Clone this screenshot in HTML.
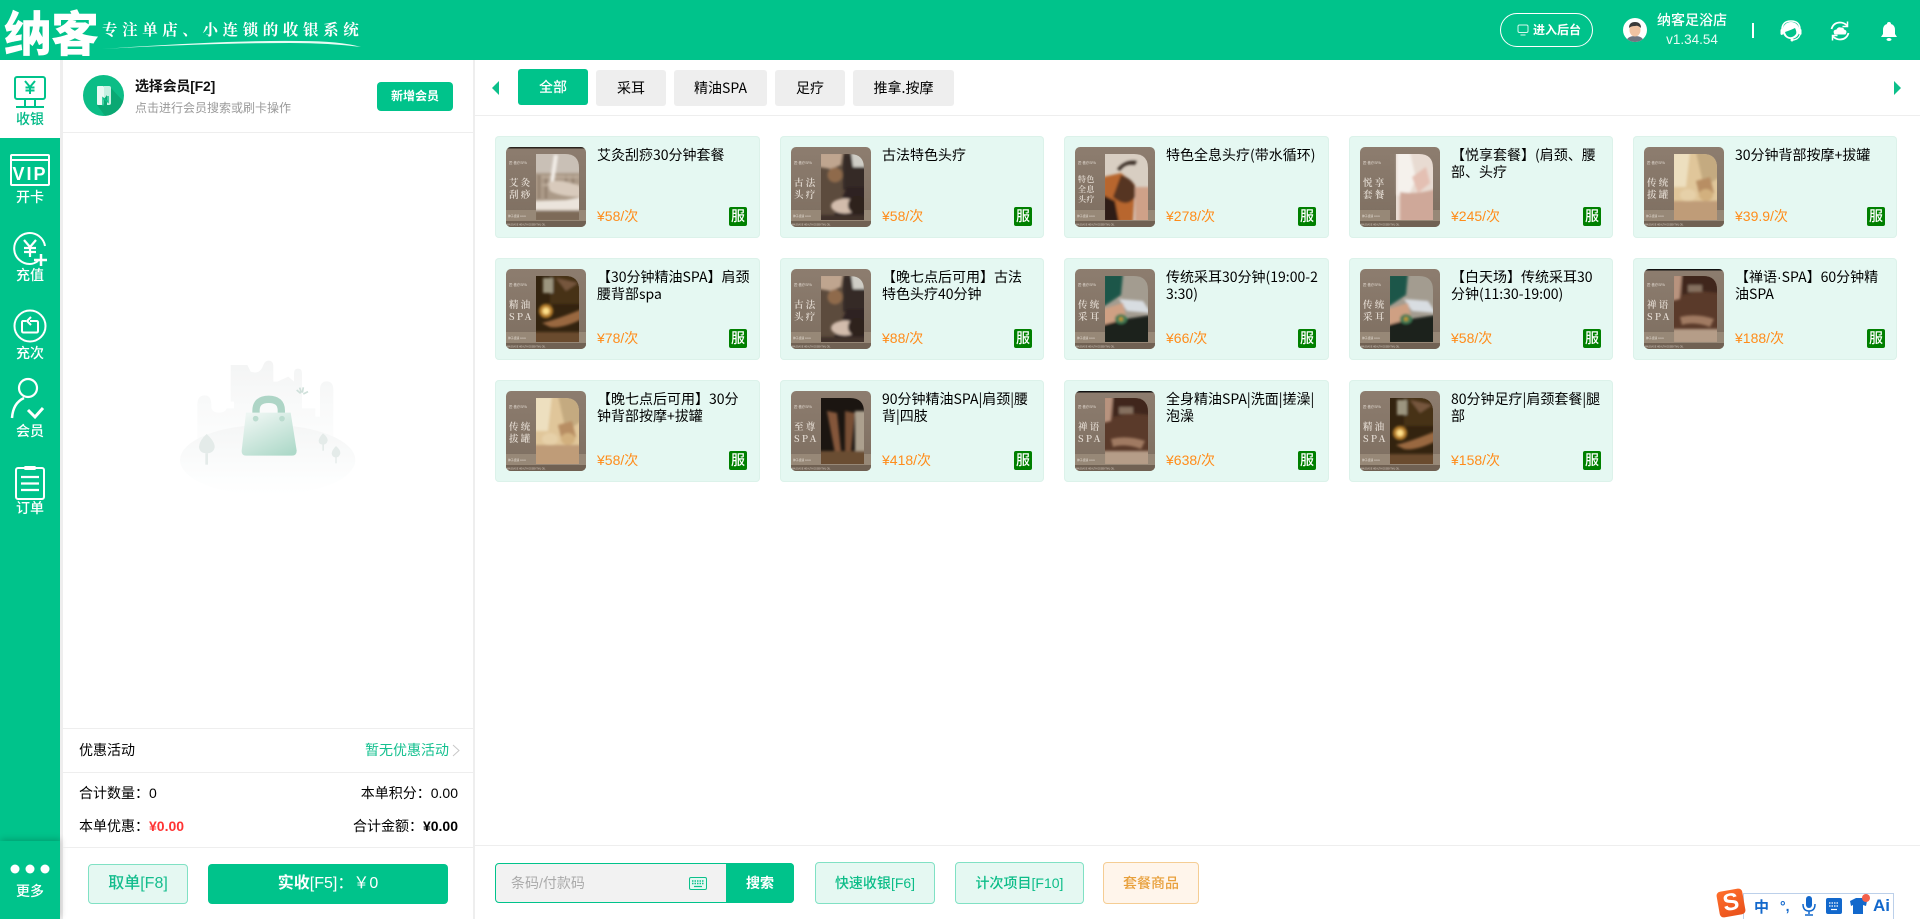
<!DOCTYPE html>
<html lang="zh">
<head>
<meta charset="utf-8">
<title>纳客</title>
<style>
html,body{margin:0;padding:0;width:1920px;height:919px;overflow:hidden;background:#fff;font-family:"Liberation Sans","Noto Sans CJK SC",sans-serif;color:#000}
.a{position:absolute;white-space:nowrap}
.bar{position:absolute;background:#eeeeee}
.side{position:absolute;left:0;width:60px;text-align:center;font-size:14px;line-height:18px;color:#fff;font-weight:500}
.tab{position:absolute;height:36px;line-height:36px;top:70px;background:#eeeeee;border-radius:3px;text-align:center;font-size:14px;color:#000;font-family:"Noto Sans CJK SC",sans-serif}
.c{position:absolute;width:264px;height:102px;background:#e5f8f2;border-radius:4px;box-shadow:inset 0 0 0 1px #dcf2ea}
.w{width:265px}
.c svg{position:absolute;left:11px;top:11px;width:80px;height:80px;border-radius:5px}
.n{position:absolute;left:102px;top:11px;font-size:14px;line-height:17px;white-space:nowrap;color:#000;font-family:"Noto Sans CJK SC",sans-serif}
.p{position:absolute;left:102px;top:70px;font-size:14px;line-height:20px;color:#ff8c1a}
.s{position:absolute;left:234px;top:71px;width:18px;height:19px;background:#008000;color:#fff;font-size:14px;font-weight:500;line-height:19px;text-align:center;border-radius:2px}
.tt{font-family:"Noto Serif CJK SC","Liberation Serif",serif;font-size:9.5px;font-weight:600;fill:#e4dcd3;letter-spacing:2.2px}
.ts{font-family:"Noto Serif CJK SC","Liberation Serif",serif;font-size:8px;font-weight:600;fill:#e4dcd3;letter-spacing:.4px}
.btn{position:absolute;text-align:center;box-sizing:border-box;border-radius:4px;white-space:nowrap}
</style>
</head>
<body>
<svg width="0" height="0" style="position:absolute">
<defs>
<linearGradient id="fb" x1="0" y1="0" x2="0" y2="1"><stop offset="0" stop-color="#8d7d6f"/><stop offset="1" stop-color="#7d6e60"/></linearGradient>
<clipPath id="arch"><path d="M30 7H59Q73 7 73 21V73H30Z"/></clipPath>
<filter id="bl" x="-10%" y="-10%" width="120%" height="120%"><feGaussianBlur stdDeviation="1.3"/></filter>
<symbol id="f" viewBox="0 0 80 80">
<rect width="80" height="80" fill="url(#fb)"/>
<rect y="63" width="80" height="17" fill="#978877"/>
<rect y="74" width="80" height="6" fill="#706153"/>
<text x="3" y="17" font-size="3.4" fill="#e0d8cf">匠·養疗SPA</text>
<text x="2" y="70" font-size="2.8" fill="#e0d8cf">神子盛遇 ∞∞∞</text>
<text x="1" y="78.3" font-size="2.3" fill="#d8cfc5">MASSAGE  HEALTH  ESSENTIAL OIL</text>
</symbol>
<symbol id="p1" viewBox="0 0 80 80"><g clip-path="url(#arch)"><rect x="30" y="7" width="43" height="66" fill="#ab9a88"/><g filter="url(#bl)">
<rect x="26" y="2" width="52" height="24" fill="#c9c0b6"/>
<path d="M33 28V52M40 28V52M60 28V46M67 28V46" stroke="#8f7c6a" stroke-width="2"/>
<path d="M36 30H73M36 38H73" stroke="#bfae9c" stroke-width="2"/>
<path d="M50 8L45 42" stroke="#f2ede7" stroke-width="4"/>
<path d="M42 36Q52 30 76 40V50Q55 50 44 44Z" fill="#d8cabc"/>
<path d="M28 54L60 53L76 50V63H28Z" fill="#ebe4dc"/>
<rect x="28" y="64" width="48" height="11" fill="#7d6a58"/>
</g></g></symbol>
<symbol id="p2" viewBox="0 0 80 80"><g clip-path="url(#arch)"><rect x="30" y="7" width="43" height="66" fill="#5c4b3d"/><g filter="url(#bl)">
<rect x="52" y="7" width="24" height="36" fill="#352b25"/>
<path d="M60 5H76V20H62Z" fill="#cfcdc6"/>
<path d="M28 5H52L50 18L40 22L28 20Z" fill="#bfa58f"/>
<ellipse cx="44" cy="28" rx="7.500" ry="7.500" fill="#8f6b4c"/>
<path d="M56 40H76V75H40Z" fill="#2f2420"/>
<ellipse cx="54" cy="59" rx="14" ry="7.500" fill="#d2bcac"/>
<ellipse cx="66" cy="58" rx="9" ry="9" fill="#2e221d"/>
<rect x="28" y="68" width="48" height="7" fill="#41302a"/>
</g></g></symbol>
<symbol id="p3" viewBox="0 0 80 80"><g clip-path="url(#arch)"><rect x="30" y="7" width="43" height="66" fill="#d8cec2"/><g filter="url(#bl)">
<path d="M42 22Q50 12 62 14L60 18Q50 16 45 24Z" fill="#3b2f28"/>
<path d="M28 30L46 26L60 38L58 75H28Z" fill="#b8662e"/>
<path d="M46 28Q64 34 60 50Q52 62 38 50Z" fill="#573422"/>
<path d="M28 48L40 54L44 75H28Z" fill="#2f1c14"/>
<rect x="60" y="40" width="16" height="35" fill="#cfa188"/>
</g></g></symbol>
<symbol id="p4" viewBox="0 0 80 80"><rect x="30" y="7" width="6" height="66" fill="url(#fb)"/><g clip-path="url(#arch)"><rect x="36" y="7" width="37" height="66" fill="#e8dbd2"/><g filter="url(#bl)">
<path d="M37 5H50L56 32L48 50L37 48Z" fill="#f5f1ec"/>
<path d="M52 30L66 20L70 36L58 46Z" fill="#e4c0b3"/>
<path d="M40 45Q56 48 76 42V75H40Z" fill="#cfa899"/>
</g></g></symbol>
<symbol id="p5" viewBox="0 0 80 80"><g clip-path="url(#arch)"><rect x="30" y="7" width="43" height="66" fill="#e0c69a"/><g filter="url(#bl)">
<path d="M28 5H46L42 40H28Z" fill="#eddfbf"/>
<path d="M52 5H76V30L60 40Z" fill="#c4aa80"/>
<path d="M52 34L66 30L70 46L56 50Z" fill="#b88e63"/>
<ellipse cx="44" cy="48" rx="8" ry="6" fill="#e6d0a8"/>
<ellipse cx="62" cy="48" rx="7" ry="6" fill="#d2b07e"/>
<rect x="28" y="54" width="48" height="21" fill="#bf9c78"/>
</g></g></symbol>
<symbol id="p6" viewBox="0 0 80 80"><g clip-path="url(#arch)"><rect x="30" y="7" width="43" height="66" fill="#33230f"/><g filter="url(#bl)">
<rect x="44" y="5" width="32" height="30" fill="#473118"/>
<path d="M37 9H47V24H37Z" fill="#9c957f"/>
<path d="M50 9L72 14L60 22Z" fill="#76563c"/>
<circle cx="40" cy="42" r="7" fill="#b87f2c"/>
<circle cx="40" cy="42" r="3.500" fill="#ffe08a"/>
<path d="M36 54Q52 50 76 40V50Q56 60 44 58Z" fill="#99683f"/>
<rect x="28" y="63" width="48" height="12" fill="#6b4c2e"/>
</g></g></symbol>
<symbol id="p7" viewBox="0 0 80 80"><g clip-path="url(#arch)"><rect x="30" y="7" width="43" height="66" fill="#a39c90"/><g filter="url(#bl)">
<path d="M28 5H48L46 26L28 38Z" fill="#1e5749"/>
<path d="M44 30L68 32L76 44L52 42Z" fill="#d8dde1"/>
<path d="M28 40L48 34L52 52L28 56Z" fill="#cfa083"/>
<path d="M28 56L50 50L76 46V75H28Z" fill="#1c241c"/>
<ellipse cx="46" cy="50" rx="6" ry="5" fill="#3f7a55"/>
<circle cx="46" cy="50" r="2" fill="#c99a2c"/>
</g></g></symbol>
<symbol id="p8" viewBox="0 0 80 80"><g clip-path="url(#arch)"><rect x="30" y="7" width="43" height="66" fill="#5a3a2a"/><g filter="url(#bl)">
<path d="M28 5H38L36 30L28 32Z" fill="#b8937e"/>
<path d="M38 5H76V24L56 22L38 26Z" fill="#3f281d"/>
<rect x="44" y="16" width="14" height="7" fill="#85705f"/>
<path d="M36 48Q52 44 70 50L66 58Q50 52 38 56Z" fill="#a07a62"/>
<rect x="28" y="60" width="48" height="15" fill="#b59d88"/>
</g></g></symbol>
<symbol id="p9" viewBox="0 0 80 80"><g clip-path="url(#arch)"><rect x="30" y="7" width="43" height="66" fill="#1b1511"/><g filter="url(#bl)">
<rect x="64" y="20" width="12" height="50" fill="#aca08e"/>
<path d="M36 20L46 22L50 60L44 62Z" fill="#84573a"/>
<path d="M54 20L64 22L60 62L54 60Z" fill="#785034"/>
<rect x="28" y="60" width="48" height="15" fill="#6b4e33"/>
</g></g></symbol>
</defs>
</svg>

<!-- header -->
<div class="a" style="left:0;top:0;width:1920px;height:60px;background:#00c38b"></div>
<div class="a" style="left:4px;top:5px;font:900 48px/50px 'Noto Sans CJK SC',sans-serif;color:#fff;letter-spacing:-1px">纳客</div>
<div class="a" style="left:102px;top:17px;font:700 15.5px/24px 'Noto Serif CJK SC',serif;color:#fff;letter-spacing:4.6px">专注单店、小连锁的收银系统</div>
<svg class="a" style="left:100px;top:38px" width="265" height="14"><path d="M2 11Q130 2 200 3Q240 3 261 9Q230 5 190 5Q110 5 2 11Z" fill="#e8fbf4"/></svg>

<div class="a" style="left:1500px;top:13px;width:93px;height:34px;box-sizing:border-box;border:1px solid #fff;border-radius:17px"></div>
<svg class="a" style="left:1517px;top:24px" width="12" height="12" viewBox="0 0 12 12"><rect x="1" y="1" width="10" height="7.500" rx="1.500" fill="none" stroke="#d8f7ec" stroke-width="1"/><path d="M3.500 11H8.500" stroke="#d8f7ec"/></svg>
<div class="a" style="left:1533px;top:21px;font-size:12px;line-height:18px;font-weight:700;color:#fff">进入后台</div>
<svg class="a" style="left:1623px;top:18px" width="24" height="24" viewBox="0 0 24 24"><defs><clipPath id="av"><circle cx="12" cy="12" r="12"/></clipPath></defs><circle cx="12" cy="12" r="12" fill="#fff"/><g clip-path="url(#av)"><path d="M3 24Q4 18 12 18Q20 18 21 24Z" fill="#6e7580"/><ellipse cx="12" cy="12" rx="5.500" ry="6.500" fill="#f0c3a2"/><path d="M6 10Q6 4 12 4Q18 4 18 10Q15 7 12 8Q8 8 6 10Z" fill="#3a3a3a"/></g></svg>
<div class="a" style="left:1657px;top:11px;width:70px;text-align:center;font-size:14px;line-height:18px;color:#fff;font-weight:500">纳客足浴店</div>
<div class="a" style="left:1657px;top:31px;width:70px;text-align:center;font-size:13.500px;line-height:18px;color:#e9fbf5">v1.34.54</div>
<div class="a" style="left:1752px;top:23px;width:2px;height:15px;background:#fff"></div>
<svg class="a" style="left:1780px;top:20px" width="22" height="22" viewBox="0 0 22 22"><circle cx="11" cy="10.500" r="8.500" fill="#fff"/><path d="M5 12Q11 10 15 8Q17 12 16 14Q13 18 9 17Q6 16 5 12Z" fill="#00c38b"/><path d="M2 10Q2 1 11 1Q20 1 20 10" fill="none" stroke="#fff" stroke-width="1.600"/><rect x="0.500" y="9" width="2.500" height="6" rx="1.200" fill="#fff"/><rect x="19" y="9" width="2.500" height="6" rx="1.200" fill="#fff"/><path d="M20 15Q18 20 12 20" fill="none" stroke="#fff" stroke-width="1.200"/><circle cx="12" cy="20" r="1.500" fill="#fff"/></svg>
<svg class="a" style="left:1830px;top:21px" width="20" height="20" viewBox="0 0 20 20"><path d="M1.500 8Q3.500 1.500 10 1.500Q14 1.500 17 4.500M18.500 12Q16.500 18.500 10 18.500Q6 18.500 3 15.500" fill="none" stroke="#fff" stroke-width="1.800"/><path d="M17.500 0.500V5.500H12.500M2.500 19.500V14.500H7.500" fill="none" stroke="#fff" stroke-width="1.500"/><path d="M4.500 13.500Q2 9 6.500 8.500Q8 5.500 11 6.500Q14 6.500 14 8.500Q18 9.500 15.500 13.500Z" fill="#fff"/></svg>
<svg class="a" style="left:1881px;top:21px" width="16" height="20" viewBox="0 0 16 20"><path d="M8 1Q10 1 10 3Q14 4 14 9V13L16 16H0L2 13V9Q2 4 6 3Q6 1 8 1Z" fill="#fff"/><ellipse cx="8" cy="18.500" rx="2.500" ry="1.500" fill="#fff"/></svg>

<!-- sidebar -->
<div class="a" style="left:0;top:60px;width:60px;height:859px;background:#00c38b"></div>
<div class="a" style="left:60px;top:60px;width:3px;height:859px;background:#eeeeee"></div>
<div class="a" style="left:0;top:60px;width:60px;height:78px;background:#fff"></div>
<svg class="a" style="left:12px;top:74px" width="36" height="36" viewBox="0 0 36 36"><rect x="3" y="3" width="30" height="22" rx="2" fill="none" stroke="#00c38b" stroke-width="2"/><path d="M13 25V32M23 25V32" stroke="#00c38b" stroke-width="2"/><path d="M4 33H32" stroke="#00c38b" stroke-width="2"/><path d="M13 7L18 13L23 7M18 13V20M13.500 13.500H22.500M13.500 16.500H22.500" fill="none" stroke="#00c38b" stroke-width="2"/></svg>
<div class="side" style="top:110px;color:#00b986">收银</div>
<svg class="a" style="left:9px;top:153px" width="42" height="34" viewBox="0 0 42 34"><rect x="2" y="2" width="38" height="30" rx="1" fill="none" stroke="#fff" stroke-width="2"/><path d="M2 7H40" stroke="#fff" stroke-width="2"/><text x="21" y="27" text-anchor="middle" font-family="Liberation Sans,sans-serif" font-size="18" font-weight="700" fill="#fff" letter-spacing="2">VIP</text></svg>
<div class="side" style="top:188px">开卡</div>
<svg class="a" style="left:12px;top:231px" width="36" height="36" viewBox="0 0 36 36"><path d="M26 30Q22 33 18 33A15.500 15.500 0 1 1 33 15" fill="none" stroke="#fff" stroke-width="2"/><path d="M12 9L18 16L24 9M18 16V26M12 17H24M12 21H24" fill="none" stroke="#fff" stroke-width="2.200"/><path d="M22 29H35M29 23V35" stroke="#fff" stroke-width="2.500"/></svg>
<div class="side" style="top:266px">充值</div>
<svg class="a" style="left:13px;top:309px" width="34" height="34" viewBox="0 0 34 34"><circle cx="17" cy="17" r="15.500" fill="none" stroke="#fff" stroke-width="2"/><path d="M13 12H10Q9 12 9 13.500V22Q9 23.500 10.500 23.500H23.500Q25 23.500 25 22V13.500Q25 12 23.500 12H17" fill="none" stroke="#fff" stroke-width="2"/><path d="M18 8L14 12L18 16" fill="none" stroke="#fff" stroke-width="2"/></svg>
<div class="side" style="top:344px">充次</div>
<svg class="a" style="left:10px;top:377px" width="36" height="44" viewBox="0 0 36 44"><circle cx="18" cy="11" r="9" fill="none" stroke="#fff" stroke-width="2.200"/><path d="M2 41Q3 26 14 21" fill="none" stroke="#fff" stroke-width="2.500"/><path d="M18 33L25 40L33 31" fill="none" stroke="#fff" stroke-width="3"/></svg>
<div class="side" style="top:422px">会员</div>
<svg class="a" style="left:14px;top:465px" width="32" height="36" viewBox="0 0 32 36"><rect x="2" y="3" width="28" height="31" rx="2" fill="none" stroke="#fff" stroke-width="2"/><rect x="10" y="1" width="12" height="4" rx="1.500" fill="#fff"/><path d="M7 12H25M7 18.500H25M7 25H25" stroke="#fff" stroke-width="2.200"/></svg>
<div class="side" style="top:499px">订单</div>
<div class="a" style="left:0;top:841px;width:60px;height:78px;background:#00c38b;box-shadow:1px -2px 6px rgba(0,0,0,.18)"></div>
<svg class="a" style="left:10px;top:864px" width="40" height="10"><circle cx="5" cy="5" r="4.500" fill="#fff"/><circle cx="20" cy="5" r="4.500" fill="#fff"/><circle cx="35" cy="5" r="4.500" fill="#fff"/></svg>
<div class="side" style="top:882px">更多</div>

<!-- left panel -->
<div class="a" style="left:473px;top:60px;width:2px;height:859px;background:#eeeeee"></div>
<svg class="a" style="left:83px;top:75px" width="41" height="41" viewBox="0 0 41 41"><defs><clipPath id="mc"><circle cx="20.500" cy="20.500" r="20.500"/></clipPath></defs><circle cx="20.500" cy="20.500" r="20.500" fill="#0cbd86"/><path clip-path="url(#mc)" d="M27 12L41 27V41H22L14 30Z" fill="#0aa873"/><rect x="14" y="11" width="7" height="19" rx="1" fill="#eaf9f4"/><path d="M21 11H26Q28 11 28 13V28Q28 30 26 30H24V20L21 24Z" fill="#c6f0e2"/><path d="M20 31L20 23L25 27V21" fill="none" stroke="#0cbd86" stroke-width="1.500"/></svg>
<div class="a" style="left:135px;top:77px;font-size:14px;line-height:18px;font-weight:700;color:#111;letter-spacing:-.2px">选择会员[F2]</div>
<div class="a" style="left:135px;top:99px;font-size:12px;line-height:18px;color:#9a9a9a">点击进行会员搜索或刷卡操作</div>
<div class="btn" style="left:377px;top:82px;width:76px;height:29px;line-height:29px;background:#00c38b;color:#fff;font-size:12px;font-weight:700">新增会员</div>
<div class="bar" style="left:63px;top:132px;width:410px;height:1px"></div>

<!-- empty illustration -->
<svg class="a" style="left:160px;top:340px" width="220" height="170" viewBox="0 0 660 510">
<defs>
<linearGradient id="g1" x1="0" y1="0" x2="0" y2="1"><stop offset="0" stop-color="#f3f4f4"/><stop offset="1" stop-color="#f9fafa" stop-opacity=".5"/></linearGradient>
<linearGradient id="g2" x1="0" y1="0" x2="0" y2="1"><stop offset="0" stop-color="#f5f6f6"/><stop offset=".8" stop-color="#fdfefe"/><stop offset="1" stop-color="#fff"/></linearGradient>
<linearGradient id="g3" x1=".2" y1="0" x2=".8" y2="1"><stop offset="0" stop-color="#eef6f3"/><stop offset="1" stop-color="#aed9c9"/></linearGradient>
</defs>
<path d="M112 300V195Q112 166 134 166Q154 166 154 195V205Q160 218 176 218Q196 218 200 205H222V185H212V75H262L272 95Q300 105 310 75Q315 62 326 62Q340 62 340 80V125H352L385 110L402 125V100Q402 86 414 86Q426 86 426 100V205H466V230H480V150Q480 124 500 124Q520 124 520 150V290Z" fill="url(#g1)"/>
<ellipse cx="323" cy="360" rx="263" ry="106" fill="url(#g2)"/>
<path d="M419 143L424 158M410 150L422 160M430 142L427 158M444 155L430 162" stroke="#cfe0da" stroke-width="5"/>
<path d="M288 220V212Q288 178 326 178Q364 178 364 212V220" fill="none" stroke="#aed5c6" stroke-width="22"/>
<path d="M258 218H392L410 332Q410 347 396 347H258Q244 347 245 332Z" fill="url(#g3)"/>
<circle cx="287" cy="236" r="8.500" fill="#bbdccf"/><circle cx="366" cy="236" r="8.500" fill="#bbdccf"/>
<path d="M140 282Q165 305 164 322Q160 340 140 340Q118 340 117 320Q118 302 140 282Z" fill="#e4ebe9"/><rect x="136" y="340" width="8" height="34" fill="#e4ebe9"/>
<path d="M489 280Q504 292 503 302Q500 314 489 314Q476 314 476 302Q477 292 489 280Z" fill="#e4ebe9"/><rect x="487" y="312" width="5" height="20" fill="#e4ebe9"/>
<path d="M528 318Q542 330 541 340Q538 352 528 352Q516 352 515 340Q516 330 528 318Z" fill="#e4ebe9"/><rect x="526" y="350" width="4" height="20" fill="#e4ebe9"/>
</svg>

<div class="bar" style="left:63px;top:728px;width:410px;height:1px"></div>
<div class="a" style="left:79px;top:741px;font-size:14px;line-height:18px;color:#000">优惠活动</div>
<div class="a" style="left:365px;top:741px;font-size:14px;line-height:18px;color:#14c08f">暂无优惠活动</div>
<svg class="a" style="left:452px;top:744px" width="8" height="13"><path d="M1 1L7 6.500L1 12" fill="none" stroke="#c8c8c8" stroke-width="1"/></svg>
<div class="bar" style="left:63px;top:772px;width:410px;height:1px"></div>
<div class="a" style="left:79px;top:784px;font-size:14px;line-height:18px;color:#000">合计数量：0</div>
<div class="a" style="right:1462px;top:784px;font-size:14px;line-height:18px;color:#000">本单积分：0.00</div>
<div class="a" style="left:79px;top:817px;font-size:14px;line-height:18px;color:#000">本单优惠：<b style="color:#ff3333">¥0.00</b></div>
<div class="a" style="right:1462px;top:817px;font-size:14px;line-height:18px;color:#000">合计金额：<b>¥0.00</b></div>
<div class="bar" style="left:63px;top:847px;width:410px;height:1px"></div>
<div class="btn" style="left:88px;top:864px;width:100px;height:40px;line-height:38px;background:#e5f8f2;border:1px solid #80e1c4;color:#14bd8d;font-size:16px"><b style="font-weight:500">取单</b>[F8]</div>
<div class="btn" style="left:208px;top:864px;width:240px;height:40px;line-height:40px;background:#00c38b;color:#fff;font-size:16px"><b style="font-weight:700">实收</b>[F5]：￥0</div>

<!-- tabs -->
<svg class="a" style="left:491px;top:80px" width="9" height="16"><path d="M8 1V15L1 8Z" fill="#0cc08b"/></svg>
<div class="tab" style="left:518px;top:69px;width:70px;background:#00c38b;color:#fff;font-weight:500">全部</div>
<div class="tab" style="left:596px;width:70px">采耳</div>
<div class="tab" style="left:674px;width:93px">精油SPA</div>
<div class="tab" style="left:775px;width:70px">足疗</div>
<div class="tab" style="left:853px;width:101px">推拿.按摩</div>
<svg class="a" style="left:1893px;top:80px" width="9" height="16"><path d="M1 1V15L8 8Z" fill="#0cc08b"/></svg>
<div class="bar" style="left:475px;top:115px;width:1445px;height:1px"></div>

<!-- cards row 1 -->
<div class="c w" style="left:495px;top:136px"><svg viewBox="0 0 80 80"><use href="#f"/><rect width="80" height="1.500" fill="#2a231e"/><use href="#p1"/><text class="tt" x="3" y="39">艾灸</text><text class="tt" x="3" y="51">刮痧</text></svg><div class="n">艾灸刮痧30分钟套餐</div><div class="p">¥58/次</div><b class="s">服</b></div>
<div class="c" style="left:780px;top:136px"><svg viewBox="0 0 80 80"><use href="#f"/><use href="#p2"/><text class="tt" x="3" y="39">古法</text><text class="tt" x="3" y="51">头疗</text></svg><div class="n">古法特色头疗</div><div class="p">¥58/次</div><b class="s">服</b></div>
<div class="c w" style="left:1064px;top:136px"><svg viewBox="0 0 80 80"><use href="#f"/><use href="#p3"/><text class="ts" x="3" y="35">特色</text><text class="ts" x="3" y="45">全息</text><text class="ts" x="3" y="55">头疗</text></svg><div class="n">特色全息头疗(带水循环)</div><div class="p">¥278/次</div><b class="s">服</b></div>
<div class="c" style="left:1349px;top:136px"><svg viewBox="0 0 80 80"><use href="#f"/><use href="#p4"/><text class="tt" x="3" y="39">悦享</text><text class="tt" x="3" y="51">套餐</text></svg><div class="n">【悦享套餐】(肩颈、腰<br>部、头疗</div><div class="p">¥245/次</div><b class="s">服</b></div>
<div class="c" style="left:1633px;top:136px"><svg viewBox="0 0 80 80"><use href="#f"/><use href="#p5"/><text class="tt" x="3" y="39">传统</text><text class="tt" x="3" y="51">拔罐</text></svg><div class="n">30分钟背部按摩+拔罐</div><div class="p">¥39.9/次</div><b class="s">服</b></div>

<!-- cards row 2 -->
<div class="c w" style="left:495px;top:258px"><svg viewBox="0 0 80 80"><use href="#f"/><use href="#p6"/><text class="tt" x="3" y="39">精油</text><text class="tt" x="3" y="51">SPA</text></svg><div class="n">【30分钟精油SPA】肩颈<br>腰背部spa</div><div class="p">¥78/次</div><b class="s">服</b></div>
<div class="c" style="left:780px;top:258px"><svg viewBox="0 0 80 80"><use href="#f"/><use href="#p2"/><text class="tt" x="3" y="39">古法</text><text class="tt" x="3" y="51">头疗</text></svg><div class="n">【晚七点后可用】古法<br>特色头疗40分钟</div><div class="p">¥88/次</div><b class="s">服</b></div>
<div class="c w" style="left:1064px;top:258px"><svg viewBox="0 0 80 80"><use href="#f"/><use href="#p7"/><text class="tt" x="3" y="39">传统</text><text class="tt" x="3" y="51">采耳</text></svg><div class="n">传统采耳30分钟(19:00-2<br>3:30)</div><div class="p">¥66/次</div><b class="s">服</b></div>
<div class="c" style="left:1349px;top:258px"><svg viewBox="0 0 80 80"><use href="#f"/><use href="#p7"/><text class="tt" x="3" y="39">传统</text><text class="tt" x="3" y="51">采耳</text></svg><div class="n">【白天场】传统采耳30<br>分钟(11:30-19:00)</div><div class="p">¥58/次</div><b class="s">服</b></div>
<div class="c" style="left:1633px;top:258px"><svg viewBox="0 0 80 80"><use href="#f"/><rect width="80" height="1.500" fill="#111"/><use href="#p8"/><text class="tt" x="3" y="39">禅语</text><text class="tt" x="3" y="51">SPA</text></svg><div class="n">【禅语<span style="font-family:'Liberation Sans',sans-serif">·</span>SPA】60分钟精<br>油SPA</div><div class="p">¥188/次</div><b class="s">服</b></div>

<!-- cards row 3 -->
<div class="c w" style="left:495px;top:380px"><svg viewBox="0 0 80 80"><use href="#f"/><use href="#p5"/><text class="tt" x="3" y="39">传统</text><text class="tt" x="3" y="51">拔罐</text></svg><div class="n">【晚七点后可用】30分<br>钟背部按摩+拔罐</div><div class="p">¥58/次</div><b class="s">服</b></div>
<div class="c" style="left:780px;top:380px"><svg viewBox="0 0 80 80"><use href="#f"/><use href="#p9"/><text class="tt" x="3" y="39">至尊</text><text class="tt" x="3" y="51">SPA</text></svg><div class="n">90分钟精油SPA|肩颈|腰<br>背|四肢</div><div class="p">¥418/次</div><b class="s">服</b></div>
<div class="c w" style="left:1064px;top:380px"><svg viewBox="0 0 80 80"><use href="#f"/><rect width="80" height="1.500" fill="#111"/><use href="#p8"/><text class="tt" x="3" y="39">禅语</text><text class="tt" x="3" y="51">SPA</text></svg><div class="n">全身精油SPA|洗面|搓澡|<br>泡澡</div><div class="p">¥638/次</div><b class="s">服</b></div>
<div class="c" style="left:1349px;top:380px"><svg viewBox="0 0 80 80"><use href="#f"/><use href="#p6"/><text class="tt" x="3" y="39">精油</text><text class="tt" x="3" y="51">SPA</text></svg><div class="n">80分钟足疗|肩颈套餐|腿<br>部</div><div class="p">¥158/次</div><b class="s">服</b></div>

<!-- bottom bar -->
<div class="bar" style="left:475px;top:845px;width:1445px;height:1px"></div>
<div class="a" style="left:495px;top:863px;width:299px;height:40px;box-sizing:border-box;border:1px solid #00c38b;border-radius:4px;background:#f2f2f2"></div>
<div class="a" style="left:511px;top:874px;font-size:14px;line-height:18px;color:#aaa">条码/付款码</div>
<svg class="a" style="left:689px;top:877px" width="18" height="13" viewBox="0 0 18 13"><rect x=".5" y=".5" width="17" height="12" rx="1.500" fill="#e5f8f2" stroke="#0cc08b"/><path d="M3 4H15M3 6.500H15" stroke="#0cc08b" stroke-width="1.500" stroke-dasharray="1.500 1"/><path d="M5 9.500H13" stroke="#0cc08b" stroke-width="1.200"/></svg>
<div class="btn" style="left:726px;top:863px;width:68px;height:40px;line-height:40px;background:#00c38b;color:#fff;font-size:14px;font-weight:700;border-radius:0 4px 4px 0">搜索</div>
<div class="btn" style="left:815px;top:862px;width:120px;height:42px;line-height:40px;background:#e5f8f2;border:1px solid #80e1c4;color:#0cbd88;font-size:14px"><b style="font-weight:500">快速收银</b>[F6]</div>
<div class="btn" style="left:955px;top:862px;width:129px;height:42px;line-height:40px;background:#e5f8f2;border:1px solid #80e1c4;color:#0cbd88;font-size:14px"><b style="font-weight:500">计次项目</b>[F10]</div>
<div class="btn" style="left:1103px;top:862px;width:96px;height:42px;line-height:40px;background:#fff5eb;border:1px solid #f5cd94;color:#e8a03c;font-size:14px;font-weight:500">套餐商品</div>

<!-- IME bar -->
<div class="a" style="left:1743px;top:893px;width:151px;height:26px;box-sizing:border-box;border:1px solid #bcd0ea;border-bottom:0;background:#fff"></div>
<div class="a" style="left:1718px;top:890px;width:26px;height:26px;border-radius:4px;background:linear-gradient(160deg,#ff6f2c,#e8501a);transform:rotate(-10deg);color:#fff;font:900 24px/26px 'Liberation Sans',sans-serif;text-align:center">S</div>
<div class="a" style="left:1754px;top:897px;font:700 15px/20px 'Noto Sans CJK SC',sans-serif;color:#1268cc">中</div>
<div class="a" style="left:1780px;top:896px;font:700 14px/20px 'Liberation Sans',sans-serif;color:#1268cc">°,</div>
<svg class="a" style="left:1802px;top:896px" width="14" height="20" viewBox="0 0 14 20"><rect x="4" y="0" width="6" height="12" rx="3" fill="#1268cc"/><path d="M1 8Q1 15 7 15Q13 15 13 8M7 15V18M3 19H11" fill="none" stroke="#1268cc" stroke-width="1.500"/></svg>
<svg class="a" style="left:1826px;top:898px" width="16" height="16" viewBox="0 0 16 16"><rect width="16" height="16" rx="2" fill="#1268cc"/><path d="M3 5H13M3 8H13" stroke="#fff" stroke-width="1.200" stroke-dasharray="1.500 1"/><path d="M5 11.500H11" stroke="#fff" stroke-width="1.200"/></svg>
<svg class="a" style="left:1849px;top:893px" width="24" height="22" viewBox="0 0 24 22"><path d="M1 8L7 5H13L18 8L17 13L14 12V21H4V12L2 13Z" fill="#1268cc"/><circle cx="17" cy="5" r="4" fill="#f4604a"/></svg>
<div class="a" style="left:1873px;top:896px;font:700 17px/20px 'Liberation Sans',sans-serif;color:#1268cc">Ai</div>
</body>
</html>
